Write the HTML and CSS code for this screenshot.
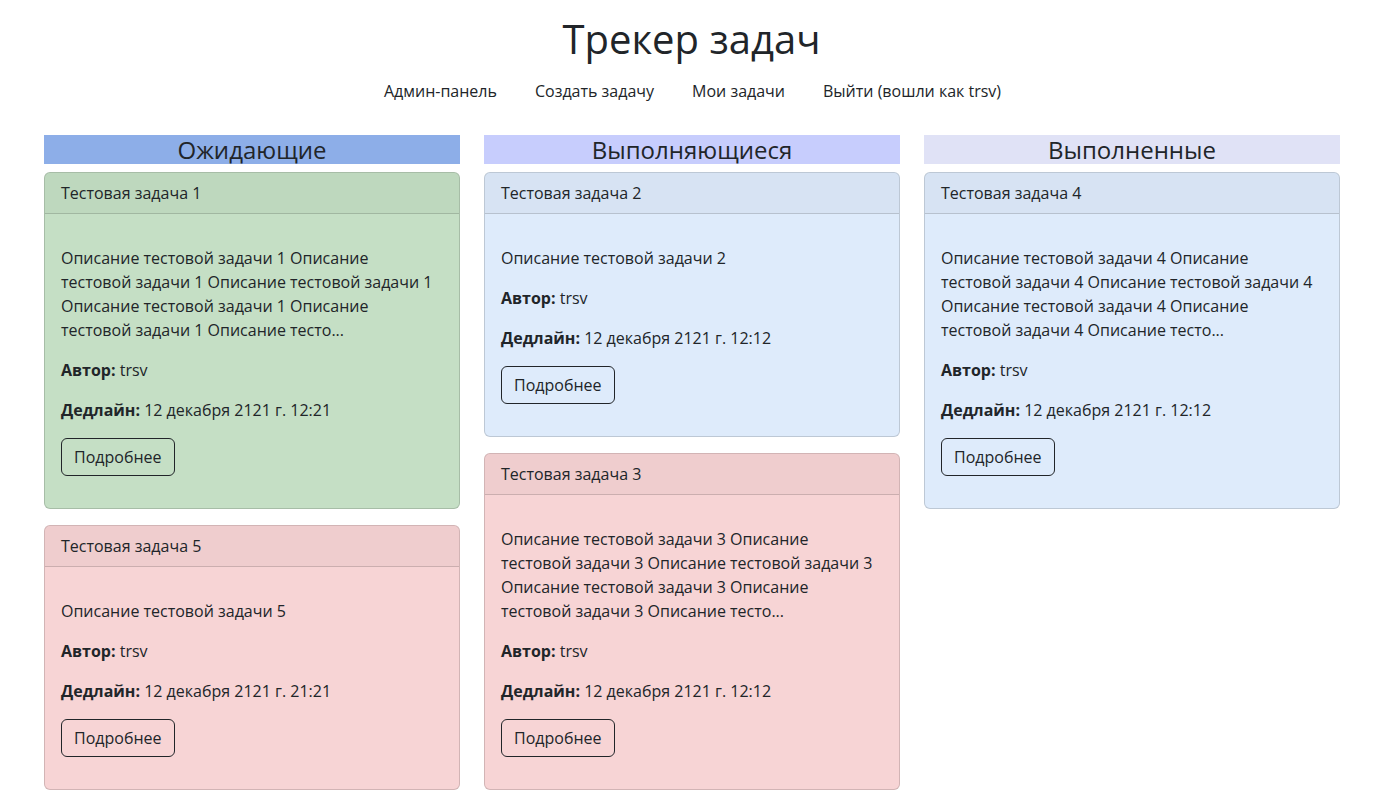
FILE: index.html
```html
<!DOCTYPE html>
<html lang="ru">
<head>
<meta charset="utf-8">
<title>Трекер задач</title>
<link rel="stylesheet" href="styles.css">
</head>
<body>
<header class="top">
  <h1 class="title">Трекер задач</h1>
  <nav class="nav">
    <a class="nav-link" href="#">Админ-панель</a>
    <a class="nav-link" href="#">Создать задачу</a>
    <a class="nav-link" href="#">Мои задачи</a>
    <a class="nav-link" href="#">Выйти (вошли как trsv)</a>
  </nav>
</header>
<main class="board">
  <section class="col">
    <h4 class="col-title t-pending">Ожидающие</h4>
    <div class="card green">
      <div class="card-header">Тестовая задача 1</div>
      <div class="card-body">
        <p>Описание тестовой задачи 1 Описание тестовой задачи 1 Описание тестовой задачи 1 Описание тестовой задачи 1 Описание тестовой задачи 1 Описание тесто...</p>
        <p><b>Автор:</b> trsv</p>
        <p><b>Дедлайн:</b> 12 декабря 2121 г. 12:21</p>
        <a class="btn" href="#">Подробнее</a>
      </div>
    </div>
    <div class="card red">
      <div class="card-header">Тестовая задача 5</div>
      <div class="card-body">
        <p>Описание тестовой задачи 5</p>
        <p><b>Автор:</b> trsv</p>
        <p><b>Дедлайн:</b> 12 декабря 2121 г. 21:21</p>
        <a class="btn" href="#">Подробнее</a>
      </div>
    </div>
  </section>
  <section class="col">
    <h4 class="col-title t-progress">Выполняющиеся</h4>
    <div class="card blue">
      <div class="card-header">Тестовая задача 2</div>
      <div class="card-body">
        <p>Описание тестовой задачи 2</p>
        <p><b>Автор:</b> trsv</p>
        <p><b>Дедлайн:</b> 12 декабря 2121 г. 12:12</p>
        <a class="btn" href="#">Подробнее</a>
      </div>
    </div>
    <div class="card red">
      <div class="card-header">Тестовая задача 3</div>
      <div class="card-body">
        <p>Описание тестовой задачи 3 Описание тестовой задачи 3 Описание тестовой задачи 3 Описание тестовой задачи 3 Описание тестовой задачи 3 Описание тесто...</p>
        <p><b>Автор:</b> trsv</p>
        <p><b>Дедлайн:</b> 12 декабря 2121 г. 12:12</p>
        <a class="btn" href="#">Подробнее</a>
      </div>
    </div>
  </section>
  <section class="col">
    <h4 class="col-title t-done">Выполненные</h4>
    <div class="card blue">
      <div class="card-header">Тестовая задача 4</div>
      <div class="card-body">
        <p>Описание тестовой задачи 4 Описание тестовой задачи 4 Описание тестовой задачи 4 Описание тестовой задачи 4 Описание тестовой задачи 4 Описание тесто...</p>
        <p><b>Автор:</b> trsv</p>
        <p><b>Дедлайн:</b> 12 декабря 2121 г. 12:12</p>
        <a class="btn" href="#">Подробнее</a>
      </div>
    </div>
  </section>
</main>
</body>
</html>
```
FILE: styles.css
```css
* { box-sizing: border-box; }
html, body { margin: 0; padding: 0; }
body {
  font-family: "Open Sans", "Noto Sans", sans-serif;
  font-size: 16px;
  line-height: 24px;
  color: #212529;
  background: #fff;
}
.top {
  text-align: center;
  padding-top: 15px;
}
.title {
  margin: 0;
  font-size: 40px;
  line-height: 48px;
  font-weight: 400;
  padding-left: 6px;
}
.nav {
  display: flex;
  justify-content: center;
  margin-top: 8px;
  padding-left: 8px;
}
.nav-link {
  color: #212529;
  text-decoration: none;
  padding: 8px 19px;
  line-height: 24px;
}
.board {
  display: flex;
  gap: 24px;
  padding: 0 37px 0 44px;
  margin-top: 24px;
  align-items: flex-start;
}
.col {
  flex: 0 0 416px;
  width: 416px;
}
.col-title {
  margin: 0 0 8px;
  font-size: 24px;
  line-height: 29px;
  font-weight: 400;
  text-align: center;
}
.t-pending { background: #8daee8; }
.t-progress { background: #c7cdfd; }
.t-done { background: #e0e2f6; }
.card {
  border: 1px solid rgba(0,0,0,0.15);
  border-radius: 6px;
  margin-bottom: 16px;
  overflow: hidden;
}
.card.green { background: #c5dfc5; }
.card.red { background: #f7d4d5; }
.card.blue { background: #deebfb; }
.card-header {
  padding: 8px 16px;
  background: rgba(0,0,0,0.03);
  border-bottom: 1px solid rgba(0,0,0,0.15);
}
.card-body {
  padding: 32px 24px 32px 16px;
}
.card-body p {
  margin: 0 0 16px;
}
.card-body b { font-weight: 700; }
.btn {
  display: inline-block;
  padding: 6px 12px;
  border: 1px solid #212529;
  border-radius: 6px;
  color: #212529;
  text-decoration: none;
  line-height: 24px;
  vertical-align: top;
}
```
